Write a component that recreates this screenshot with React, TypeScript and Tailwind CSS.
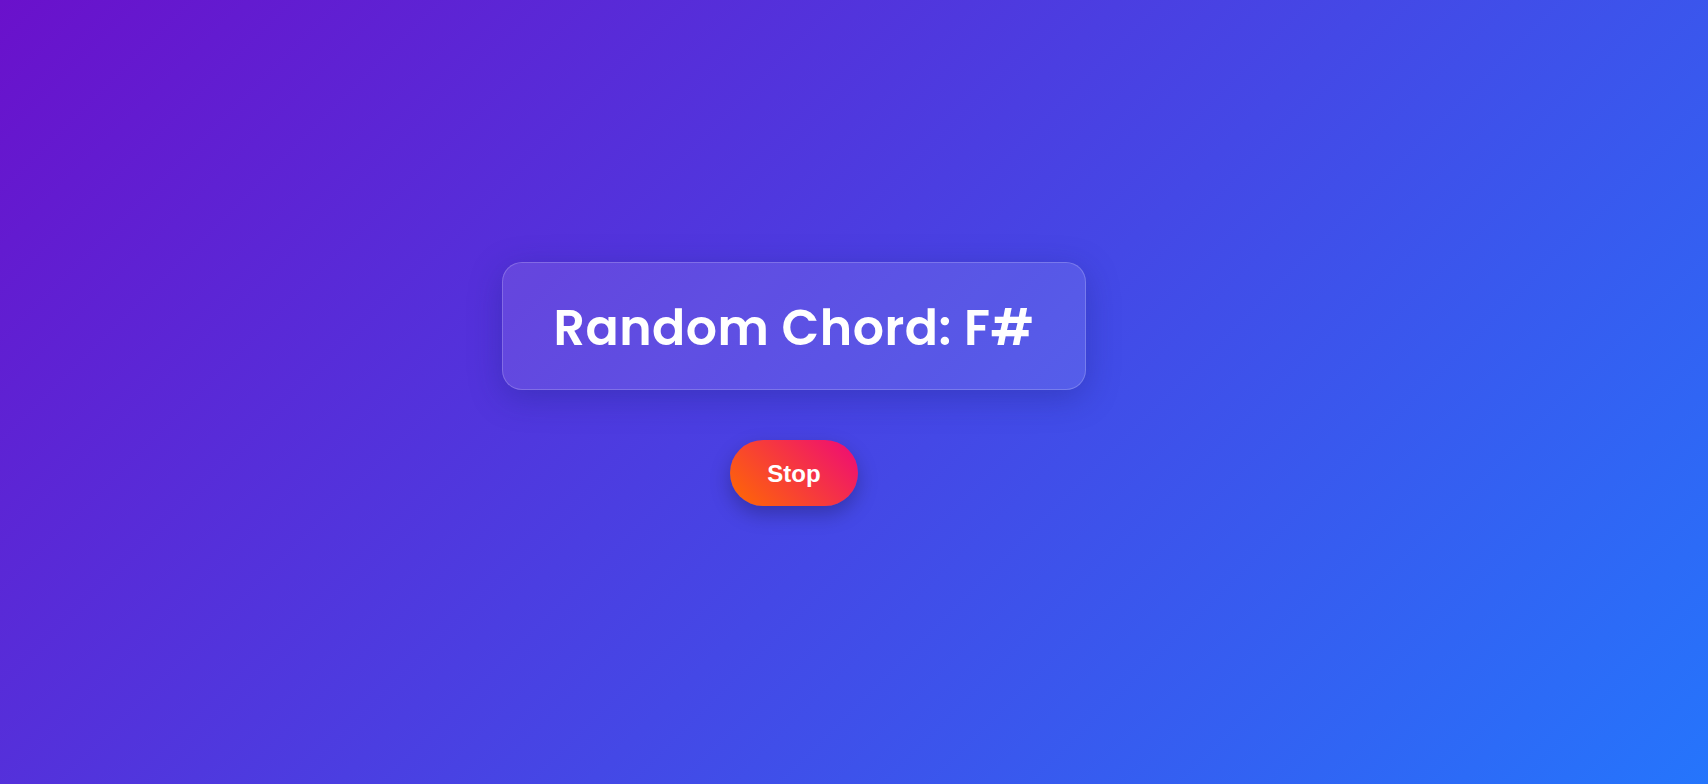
export default function App() {
  return (
    <div className="flex h-screen w-full flex-col items-center justify-center bg-[linear-gradient(135deg,#6a11cb,#2575fc)] pr-[120px] pb-[16px]">
      <div className="flex h-[128px] w-[584px] items-center justify-center rounded-[20px] border border-white/20 bg-white/10 pt-[4px] shadow-[0_8px_32px_rgba(31,38,135,0.37)]">
        <h1 className="font-['Poppins','Inter',sans-serif] text-[49px] font-semibold leading-none tracking-[0.5px] text-white">
          Random Chord: F#
        </h1>
      </div>
      <button className="mt-[50px] h-[66px] w-[128px] rounded-full bg-[linear-gradient(45deg,#ff6a00,#ee0979)] pt-[2px] font-['Liberation_Sans',Arial,sans-serif] text-[24px] font-bold text-white shadow-[0_8px_20px_rgba(0,0,0,0.25)]">
        Stop
      </button>
    </div>
  )
}
